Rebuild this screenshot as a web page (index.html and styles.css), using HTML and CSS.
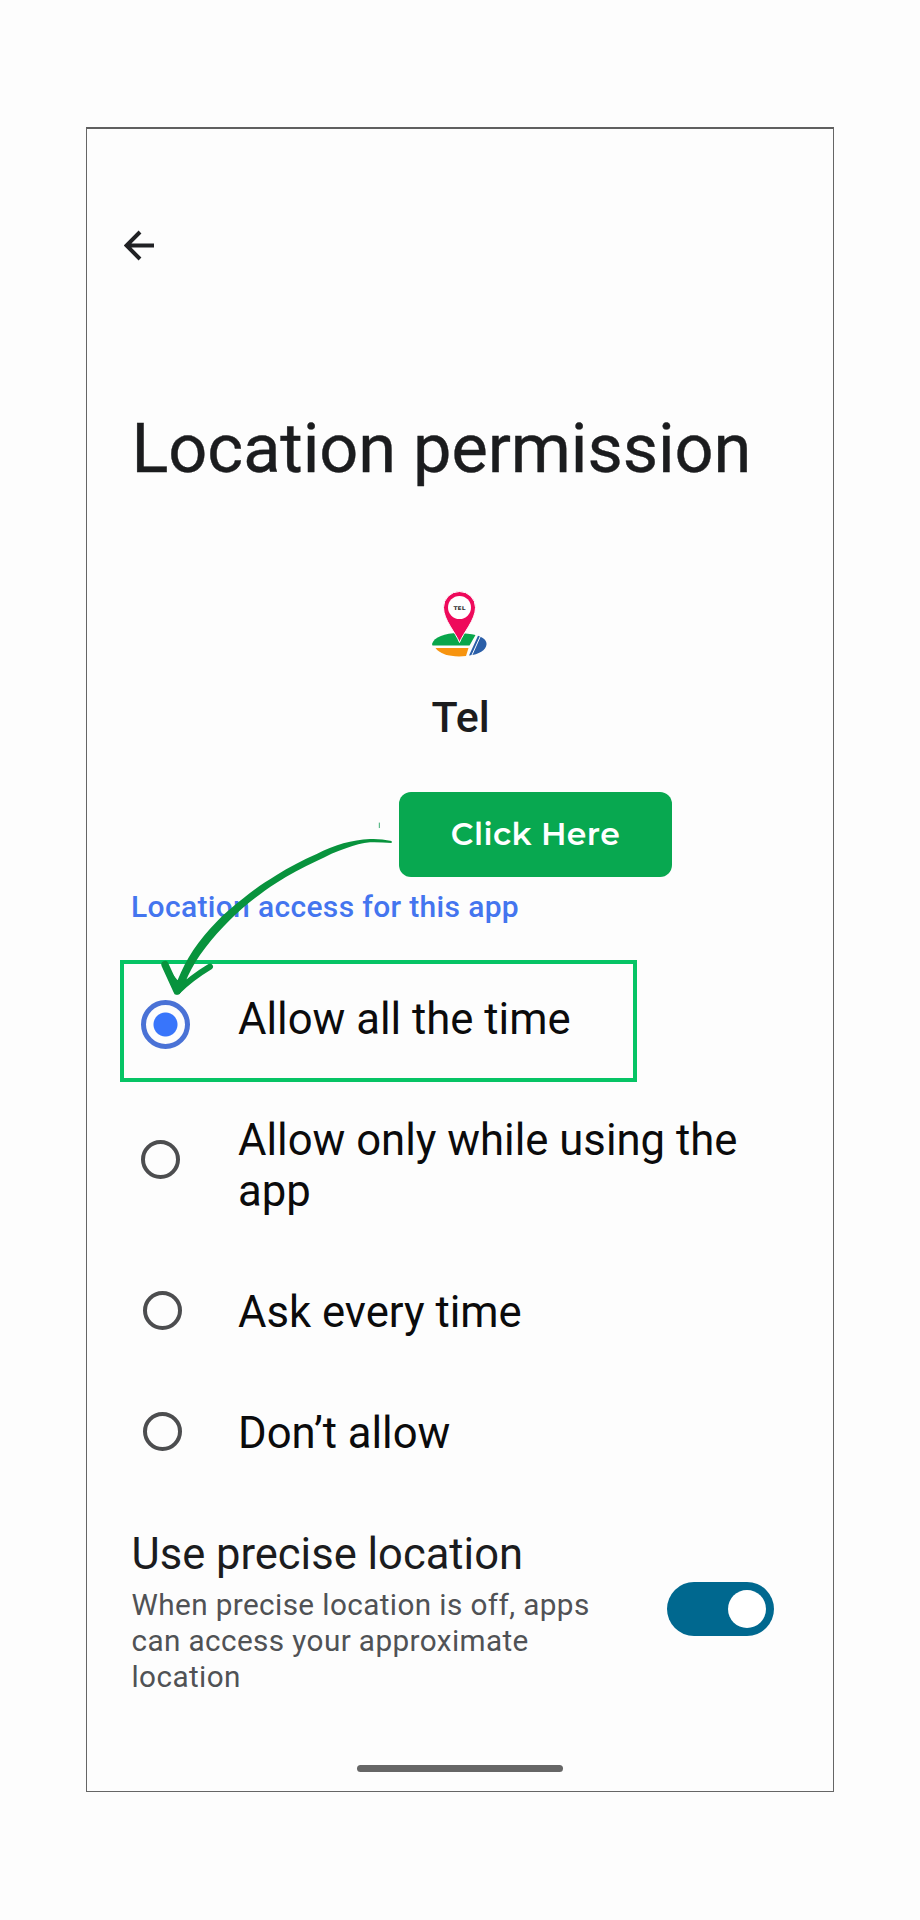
FILE: index.html
```html
<!DOCTYPE html>
<html lang="en">
<head>
<meta charset="utf-8">
<title>Location permission</title>
<link rel="stylesheet" href="styles.css">
</head>
<body>
<main class="screen">
  <svg class="back" viewBox="0 0 31 31"><path d="M30 15.5H3M16 2 2.5 15.5 16 29" /></svg>
  <h1 class="title">Location permission</h1>
  <svg class="logo" viewBox="0 0 55 66">
    <path fill="#08a64b" d="M0 53C2 46 13 42 26 42C33 42 39 43 43.500 44L37.500 54.500H.5Z"/>
    <path fill="#f7940f" d="M3.500 57H36.500L34 65C20 66.500 8 63.500 3.500 57Z"/>
    <path fill="#2b5fa8" d="M46 44.800C52 47 55 50 54.500 53.500C54 59 47 63.500 37 64.500Z"/>
    <path stroke="#fff" stroke-width="1" d="M48.500 45 39.500 65"/>
    <path fill="#ee0a5b" stroke="#fff" stroke-width="1" d="M27.500 51.500C24 42 11.500 29 11.500 16.500a16 16 0 0 1 32 0C43.500 29 31 42 27.500 51.500Z"/>
    <circle cx="27.500" cy="16.500" r="11.500" fill="#fff"/>
    <text class="logo-text" x="21.500" y="18.500" textLength="12" lengthAdjust="spacingAndGlyphs">TEL</text>
  </svg>
  <h2 class="app-name">Tel</h2>
  <button class="callout">Click Here</button>
  <h3 class="section">Location access for this app</h3>
  <div class="option chosen">
    <i class="radio on"></i><span class="label">Allow all the time</span>
  </div>
  <div class="option while">
    <i class="radio"></i><span class="label">Allow only while using the<br>app</span>
  </div>
  <div class="option ask">
    <i class="radio"></i><span class="label">Ask every time</span>
  </div>
  <div class="option deny">
    <i class="radio"></i><span class="label">Don’t allow</span>
  </div>
  <section class="precise">
    <div>
      <h2 class="precise-title">Use precise location</h2>
      <p class="precise-text">When precise location is off, apps<br>can access your approximate<br>location</p>
    </div>
    <div class="toggle"><i class="knob"></i></div>
  </section>
  <div class="home"></div>
  <svg class="pointer" viewBox="150 120 705 528">
    <path class="shaft" d="M845 183C822 178 801 176 780 177C752 178 727 183 700 190C672 198 646 209 620 222C577 241 537 262 500 285C464 307 431 329 400 355C372 377 345 399 320 425C294 452 270 480 250 510C231 538 216 569 203 600L225 608C237 579 252 551 270 525C291 495 314 466 340 440C364 415 389 391 415 370C442 348 470 327 500 308C538 284 578 263 620 243C650 229 679 213 710 204C733 196 757 188 780 187C802 186 823 188 845 189Z"/>
    <path class="barb-left" d="M165 554 201 633"/>
    <path class="barb-right" d="M300 560Q245 593 203 634"/>
    <path class="shaft" d="M178 570 202 600 240 597 208 643H194Z"/>
    <path class="speck" d="M808 129v14"/>
  </svg>
</main>
</body>
</html>
```
FILE: styles.css
```css
* { box-sizing: border-box; }
body { margin: 0; padding: 127px 0 0 86px; height: 1920px; background: #fdfdfd; font-family: Roboto, sans-serif; overflow: hidden; }
h1, h2, h3, p { margin: 0; font-weight: 400; white-space: nowrap; }
.screen { position: relative; width: 748px; height: 1665px; border: 1px solid #666; border-top: 2px solid #606060; background: #fdfdfd; display: flex; flex-direction: column; align-items: flex-start; }
.back { margin: 101px 0 0 37px; width: 31px; height: 31px; fill: none; stroke: #202124; stroke-width: 4; }
.title { margin: 148px 0 0 44.500px; font-size: 68.500px; line-height: 80px; letter-spacing: -.06px; color: #1b1c1e; -webkit-text-stroke: .4px #1b1c1e; }
.logo { margin: 102px 0 0 344.500px; width: 55px; height: 66px; }
.logo-text { font: 700 5px "DejaVu Sans", sans-serif; fill: #333; }
.app-name { margin: 34.600px 0 0 344.500px; font-size: 43px; line-height: 50px; font-weight: 500; color: #1b1c1e; }
.callout { margin: 50.400px 0 0 312px; width: 273px; height: 85px; padding: 0; border: 0; border-radius: 12px; background: #08a850; color: #fff; font: 600 31.500px/85px Montserrat, Inter, sans-serif; letter-spacing: .4px; }
.section { margin: 11.700px 0 0 44px; font-size: 30px; line-height: 36px; font-weight: 500; letter-spacing: .34px; color: #4475ef; }
.option { display: grid; grid-template-columns: 111px auto; margin-left: 40px; font-size: 43.650px; line-height: 51px; color: #0b0b0c; white-space: nowrap; }
.label { position: relative; top: 1px; }
.radio { width: 39px; height: 39px; border: 4px solid #4c4d4f; border-radius: 50%; margin: 5px 0 0 15.500px; }
.radio.on { width: 49px; height: 49px; border: 5px solid #4a72d6; background: radial-gradient(circle, #3875fb 11.500px, #fdfdfd 12.500px); }
.chosen { margin: 35.300px 0 0 33px; width: 517px; height: 122px; border: 4px solid #06c465; padding-top: 29.500px; grid-template-columns: 114px auto; }
.chosen .radio { margin: 6.500px 0 0 16.500px; }
.while { margin-top: 32.500px; }
.while .radio { margin: 26px 0 0 13.500px; }
.ask { margin-top: 69.300px; }
.deny { margin-top: 70.700px; }
.precise { display: flex; width: 642.500px; margin: 71.300px 0 0 44.500px; justify-content: space-between; }
.precise-title { font-size: 43.500px; line-height: 50px; color: #1b1c1e; }
.precise-text { margin-top: 7px; font-size: 29.700px; line-height: 36px; letter-spacing: .4px; color: #505255; }
.toggle { width: 107px; height: 54px; margin-top: 52.200px; border-radius: 27px; background: #00688f; padding: 8px; display: flex; justify-content: flex-end; }
.knob { width: 38px; height: 38px; border-radius: 50%; background: #fff; }
.home { margin: 70.200px 0 0 269.500px; width: 206px; height: 7.500px; border-radius: 4px; background: #666; }
.pointer { position: absolute; left: 73px; top: 691px; width: 235px; height: 176px; fill: none; stroke-linecap: round; }
.shaft { fill: #08933d; }
.barb-left { stroke: #08933d; stroke-width: 22px; }
.barb-right { stroke: #08933d; stroke-width: 18px; }
.speck { stroke: #3fae74; stroke-width: 3px; }
```
